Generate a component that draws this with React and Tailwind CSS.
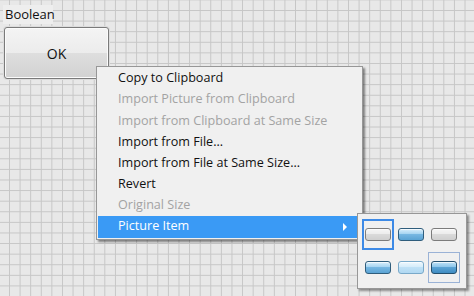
import React from "react";

const font = { fontFamily: '"Open Sans", "Noto Sans", sans-serif' };

function Btn({ kind }) {
  const styles = {
    gray: "border-[#7c7c7c] bg-[linear-gradient(to_bottom,#f6f6f6_0%,#ebebeb_50%,#dadada_50%,#cfcfcf_100%)]",
    blue: "border-[#2f5d7c] bg-[linear-gradient(to_bottom,#d9effc_0%,#9fd1f0_50%,#76b7e2_50%,#5aa3d4_100%)]",
    light: "border-[#79a9c9] bg-[linear-gradient(to_bottom,#eef8fe_0%,#d2ebfa_50%,#bfe1f6_50%,#b0d8f2_100%)]",
    dark: "border-[#234f6d] bg-[linear-gradient(to_bottom,#bfe3f8_0%,#86c2e8_50%,#5aa3d4_50%,#3f8cc2_100%)]",
  };
  return (
    <div className={`w-[26px] h-[13px] rounded-[3px] border shadow-[inset_0_1px_0_rgba(255,255,255,0.7)] ${styles[kind]}`} />
  );
}

const items = [
  { t: "Copy to Clipboard", d: false },
  { t: "Import Picture from Clipboard", d: true },
  { t: "Import from Clipboard at Same Size", d: true },
  { t: "Import from File...", d: false },
  { t: "Import from File at Same Size...", d: false },
  { t: "Revert", d: false },
  { t: "Original Size", d: true },
];

export default function App() {
  return (
    <div
      className="relative w-[474px] h-[296px] overflow-hidden bg-[#e8e8e8] bg-[linear-gradient(to_right,#c6c6c6_1px,transparent_1px),linear-gradient(to_bottom,#c6c6c6_1px,transparent_1px)] bg-[size:10.6px_10.6px] bg-[position:9px_10px]"
      style={font}
    >
      {/* Boolean control */}
      <div className="pt-[5px] pl-[3px]">
        <div className="w-[50px] h-[19px] bg-[#eeeeee] text-[13px] leading-[19px] text-[#111] pl-[2px] whitespace-nowrap">
          Boolean
        </div>
        <div className="mt-[3px] ml-[1px] w-[105px] h-[52px] rounded-[3px] border border-[#7a7a7a] shadow-[0_0_0_1px_#dcdcdc,inset_0_0_0_1px_#fbfbfb] bg-[linear-gradient(to_bottom,#f4f4f4_0%,#ececec_50%,#dedede_50%,#d2d2d2_100%)] flex items-center justify-center text-[14px] text-[#111]">
          OK
        </div>
      </div>

      {/* Context menu */}
      <div className="absolute left-[96px] top-[66px] w-[267px] bg-[#f0f0f0] border border-[#979797] shadow-[2px_2px_2px_rgba(0,0,0,0.45)] py-[1px] px-[1px] text-[12.6px]">
        {items.map((it) => (
          <div
            key={it.t}
            className={`h-[21.2px] flex items-center pl-[20px] ${it.d ? "text-[#a3a3a3]" : "text-[#111]"}`}
          >
            {it.t}
          </div>
        ))}
        <div className="h-[21.2px] flex items-center pl-[20px] pr-[14px] bg-[#3a9af5] text-white justify-between">
          <span>Picture Item</span>
          <span className="w-0 h-0 border-y-[4px] border-y-transparent border-l-[4px] border-l-white" />
        </div>
      </div>

      {/* Submenu */}
      <div className="absolute left-[357px] top-[213px] w-[110px] h-[76px] bg-[#f0f0f0] border border-[#979797] shadow-[2px_2px_2px_rgba(0,0,0,0.4)] pl-[4px] pt-[5px]">
        <div className="grid grid-cols-[32px_32px_32px] grid-rows-[31px_31px] gap-x-[1px] gap-y-[2px]">
          <div className="flex items-center justify-center border-2 border-[#3d8ae6]">
            <Btn kind="gray" />
          </div>
          <div className="flex items-center justify-center">
            <Btn kind="blue" />
          </div>
          <div className="flex items-center justify-center">
            <Btn kind="gray" />
          </div>
          <div className="flex items-center justify-center">
            <Btn kind="blue" />
          </div>
          <div className="flex items-center justify-center">
            <Btn kind="light" />
          </div>
          <div className="flex items-center justify-center border border-[#9ab2d6]">
            <Btn kind="dark" />
          </div>
        </div>
      </div>
    </div>
  );
}
